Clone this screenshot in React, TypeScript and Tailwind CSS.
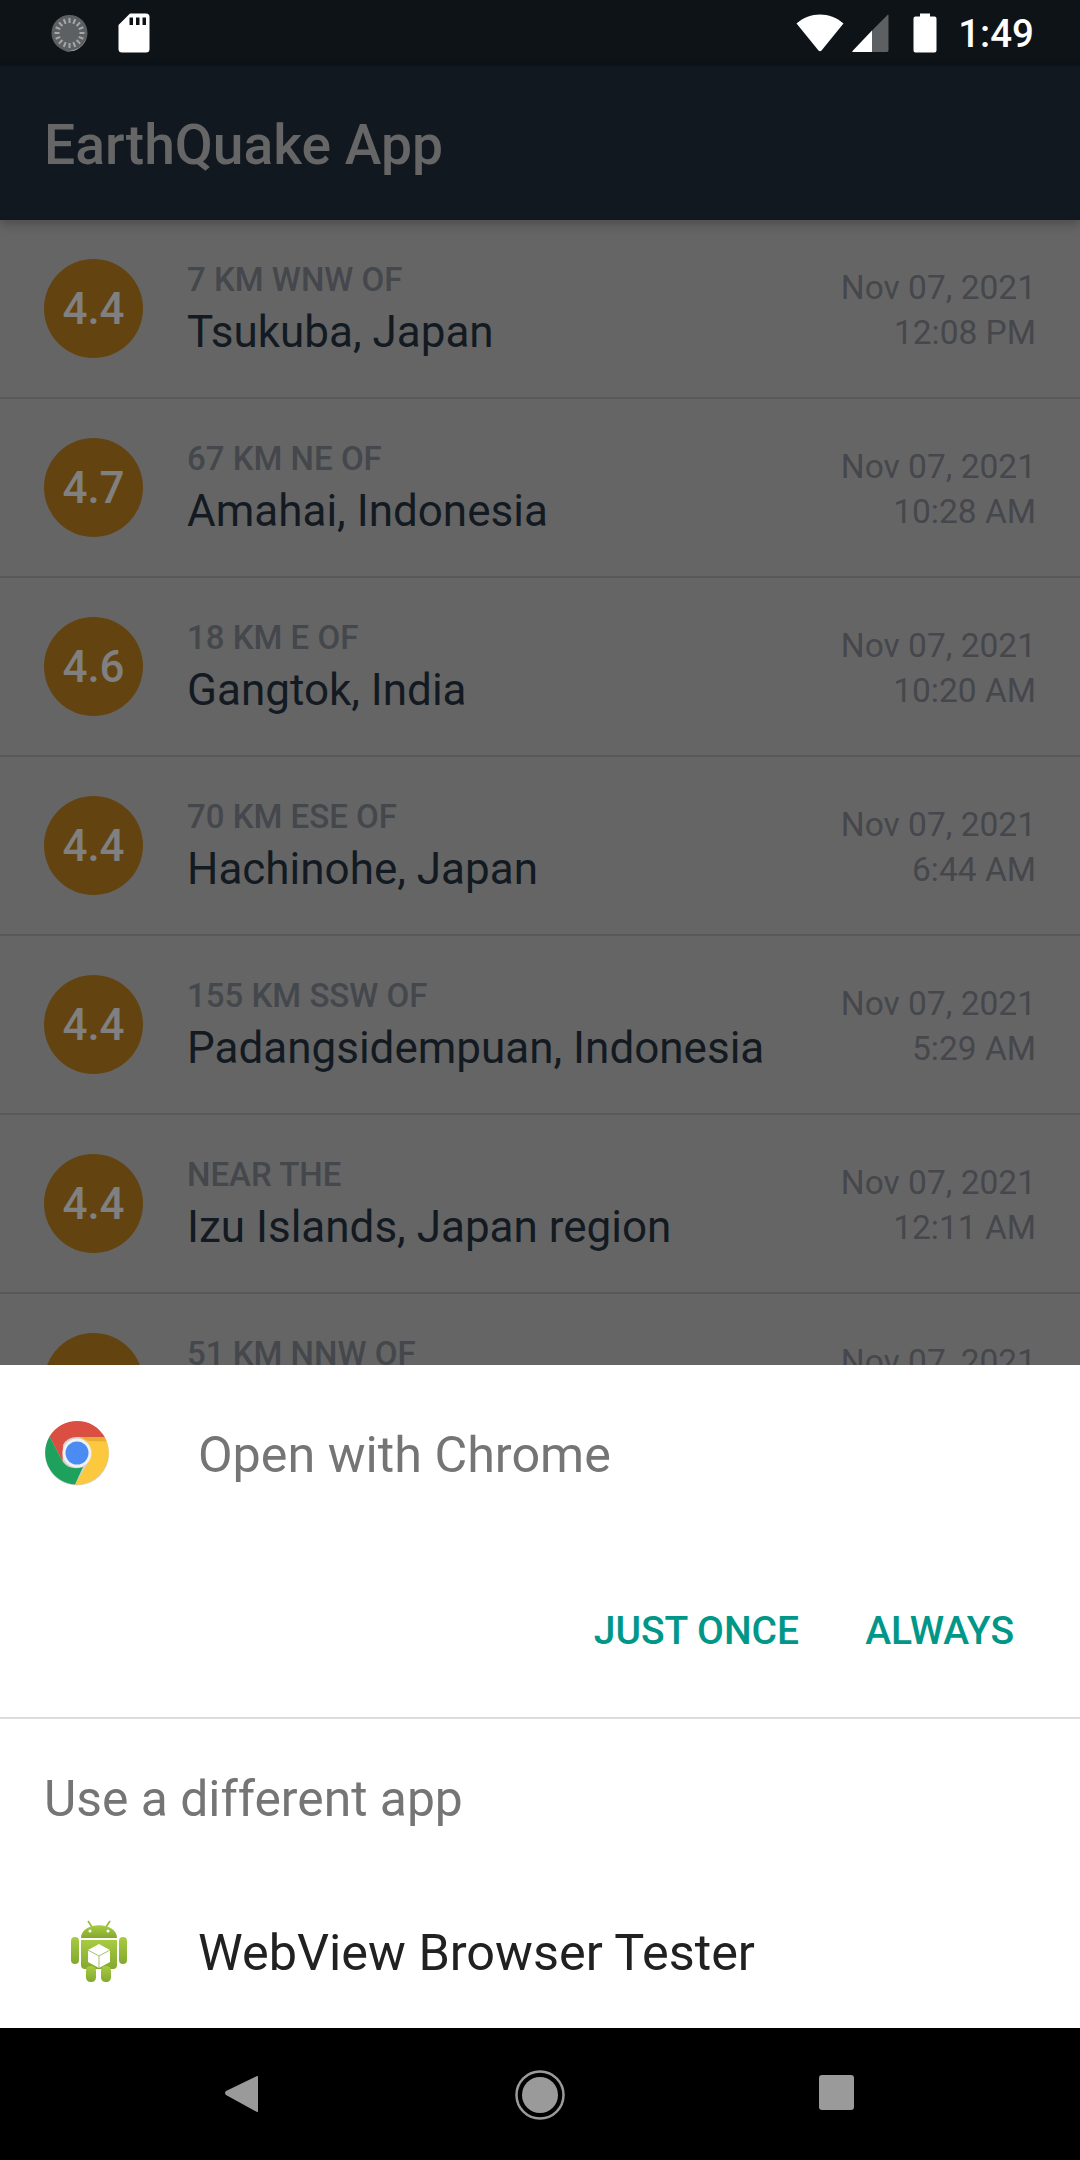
const rows = [
  { mag: "4.4", sub: "7 KM WNW OF", place: "Tsukuba, Japan", date: "Nov 07, 2021", time: "12:08 PM" },
  { mag: "4.7", sub: "67 KM NE OF", place: "Amahai, Indonesia", date: "Nov 07, 2021", time: "10:28 AM" },
  { mag: "4.6", sub: "18 KM E OF", place: "Gangtok, India", date: "Nov 07, 2021", time: "10:20 AM" },
  { mag: "4.4", sub: "70 KM ESE OF", place: "Hachinohe, Japan", date: "Nov 07, 2021", time: "6:44 AM" },
  { mag: "4.4", sub: "155 KM SSW OF", place: "Padangsidempuan, Indonesia", date: "Nov 07, 2021", time: "5:29 AM" },
  { mag: "4.4", sub: "NEAR THE", place: "Izu Islands, Japan region", date: "Nov 07, 2021", time: "12:11 AM" },
  { mag: "4.4", sub: "51 KM NNW OF", place: "", date: "Nov 07, 2021", time: "" },
];

// spinner ticks for the status bar icon
const ticks = Array.from({ length: 16 }, (_, i) => (i * 360) / 16);

const StatusBar = () => (
  <div className="flex h-[66px] items-center bg-[#0e1317] pl-[51px] pr-[46px]">
    <svg width="38" height="40" viewBox="0 0 38 40">
      <circle cx="18.5" cy="20" r="18" fill="#5c6063" />
      <path d="M35 26 A18 18 0 0 1 11 37 A19 19 0 0 0 35 26 Z" fill="#e8e8e8" />
      {ticks.map((a) => (
        <rect key={a} x="17.5" y="5" width="2" height="5" fill="#a5a7a9" transform={`rotate(${a} 18.5 20)`} />
      ))}
    </svg>
    <svg className="ml-[29px]" width="32" height="40" viewBox="0 0 32 40">
      <path d="M12 0.5H28Q31.5 .5 31.5 4V36Q31.5 39.5 28 39.5H4Q.5 39.5 .5 36V12Z" fill="#fff" />
      <rect x="11.5" y="4.5" width="3.5" height="7.5" fill="#0e1317" />
      <rect x="18" y="4.5" width="3.5" height="7.5" fill="#0e1317" />
      <rect x="24.5" y="4.5" width="3.5" height="7.5" fill="#0e1317" />
    </svg>
    <div className="ml-auto flex items-center">
      <svg width="48" height="38" viewBox="0 0 48 38">
        <path d="M0.5 9.5C14 -2.5 34 -2.5 47.5 9.5L25.5 36.5Q24 38 22.5 36.5Z" fill="#fff" />
      </svg>
      <svg className="ml-[7px]" width="38" height="40" viewBox="0 0 38 40">
        <path d="M21 17.5L37 1.5Q37.5 1 37.5 3V37Q37.5 39 36 39H21Z" fill="#5c6063" />
        <path d="M21 17.5V39H2Q.5 39 1.5 38Z" fill="#fff" />
      </svg>
      <svg className="ml-[24px]" width="24" height="40" viewBox="0 0 24 40">
        <path d="M7 0.5H17V3.5H21.5Q23.5 3.5 23.5 5.5V37.5Q23.5 39.5 21.5 39.5H2.5Q.5 39.5 .5 37.5V5.5Q.5 3.5 2.5 3.5H7Z" fill="#fff" />
      </svg>
      <span className="ml-[21px] mt-[2px] text-[38.5px] font-medium leading-none text-white">1:49</span>
    </div>
  </div>
);

const AppBar = () => (
  <div className="relative z-10 flex h-[154px] items-center bg-[#111820] pl-[44px] pt-[5px] shadow-[0_4px_10px_rgba(0,0,0,0.25)]">
    <h1 className="text-[55.2px] font-medium text-[#666666]">EarthQuake App</h1>
  </div>
);

type Row = (typeof rows)[number];

const QuakeRow = ({ row }: { row: Row }) => (
  <div className="flex h-[179px] shrink-0 items-center border-b-2 border-[#585858] pl-[44px] pr-[44px]">
    <div className="flex h-[99px] w-[99px] shrink-0 items-center justify-center rounded-full bg-[#634410] pt-[1px] text-[44px] font-medium text-[#808080]">
      {row.mag}
    </div>
    <div className="ml-[44px] flex-1">
      <div className="mt-[2px] text-[33px] font-medium leading-[38px] text-[#44474c]">{row.sub}</div>
      <div className="mt-[7px] h-[52px] text-[44px] leading-[52px] text-[#131a22]">{row.place}</div>
    </div>
    <div className="pt-[2px] text-right text-[33.5px] leading-[45px] text-[#45474c]">
      <div>{row.date}</div>
      <div className="h-[45px]">{row.time}</div>
    </div>
  </div>
);

const ChromeIcon = () => (
  <svg width="66" height="66" viewBox="0 0 66 66">
    <circle cx="33" cy="33.5" r="32" fill="#d0d0d0" />
    <path d="M5.5 16.5A32 32 0 0 1 60.7 17L33 17Q23 17 19 25L18.5 41Z" fill="#db4e42" />
    <path d="M60.7 17A32 32 0 0 1 31 64.5L45 41Q49 33 44 23L36 17Z" fill="#fcc83e" />
    <path d="M31 64.5A32 32 0 0 1 5.5 16.5L19 42Q26 51 39 47Z" fill="#1da15c" />
    <path d="M36 17L60.7 17L62.3 21.5L44 21Z" fill="#e8ab35" />
    <circle cx="33" cy="33" r="14.5" fill="#f1f1f1" />
    <circle cx="33" cy="33" r="11.5" fill="#4b8cf4" />
  </svg>
);

const AndroidIcon = () => (
  <svg className="mb-[6px]" width="56" height="64" viewBox="0 0 56 64">
    <defs>
      <linearGradient id="bot" x1="0" y1="0" x2="0" y2="1">
        <stop offset="0" stopColor="#a8cb42" />
        <stop offset="1" stopColor="#83a82e" />
      </linearGradient>
    </defs>
    <path d="M17 3L21 9M39 3L35 9" stroke="#93b836" strokeWidth="1.6" />
    <path d="M10 20C10 3 46 3 46 20Z" fill="url(#bot)" />
    <circle cx="19" cy="13" r="1.5" fill="#fff" />
    <circle cx="37" cy="13" r="1.5" fill="#fff" />
    <path d="M10 22H46V47Q46 51 42 51H14Q10 51 10 47Z" fill="url(#bot)" />
    <rect x="0" y="19" width="8" height="27" rx="4" fill="url(#bot)" />
    <rect x="48" y="19" width="8" height="27" rx="4" fill="url(#bot)" />
    <rect x="15" y="48" width="10" height="16" rx="4.5" fill="url(#bot)" />
    <rect x="30" y="48" width="10" height="16" rx="4.5" fill="url(#bot)" />
    <path d="M28 26L39 32V44L28 50L17 44V32Z" fill="#fff" />
    <path d="M17 32L28 38L39 32M28 38V50" stroke="#a9bf6a" strokeWidth="1" fill="none" />
  </svg>
);

const Sheet = () => (
  <div className="h-[663px] bg-white">
    <div className="flex h-[354px] flex-col border-b-2 border-[#dcdcdc]">
      <div className="flex h-[176px] items-center pl-[44px]">
        <ChromeIcon />
        <span className="ml-[88px] pt-[3px] text-[50.3px] text-[#757575]">Open with Chrome</span>
      </div>
      <div className="flex justify-end gap-[66px] pr-[66px] pt-[61px] text-[39px] font-medium text-[#009688]">
        <span>JUST ONCE</span>
        <span>ALWAYS</span>
      </div>
    </div>
    <div className="pl-[44px] pt-[51px] text-[49.8px] leading-[58px] text-[#757575]">Use a different app</div>
    <div className="mt-[87px] flex items-center pl-[71px]">
      <AndroidIcon />
      <span className="ml-[71px] text-[50.4px] text-[#212121]">WebView Browser Tester</span>
    </div>
  </div>
);

const NavBar = () => (
  <div className="flex h-[132px] items-start justify-between bg-black pl-[224px] pr-[226px] pt-[42px]">
    <svg width="36" height="48" viewBox="0 0 36 48">
      <path d="M2 21L33 6Q34 5.5 34 7V41Q34 42.5 33 42L2 25Q0 23 2 21Z" fill="#9a9a9a" />
    </svg>
    <svg width="50" height="50" viewBox="0 0 50 50">
      <circle cx="25" cy="25" r="23.5" fill="none" stroke="#9a9a9a" strokeWidth="2.5" />
      <circle cx="25" cy="25" r="18" fill="#9a9a9a" />
    </svg>
    <div className="mt-[5px] h-[35px] w-[35px] rounded-[3px] bg-[#9a9a9a]" />
  </div>
);

export default function App() {
  return (
    <div className="flex h-[2160px] w-[1080px] flex-col overflow-hidden bg-[#656565] font-['Roboto',sans-serif]">
      <StatusBar />
      <AppBar />
      <div className="flex h-[1145px] shrink-0 flex-col overflow-hidden">
        {rows.map((row) => (
          <QuakeRow key={row.sub} row={row} />
        ))}
      </div>
      <Sheet />
      <NavBar />
    </div>
  );
}
